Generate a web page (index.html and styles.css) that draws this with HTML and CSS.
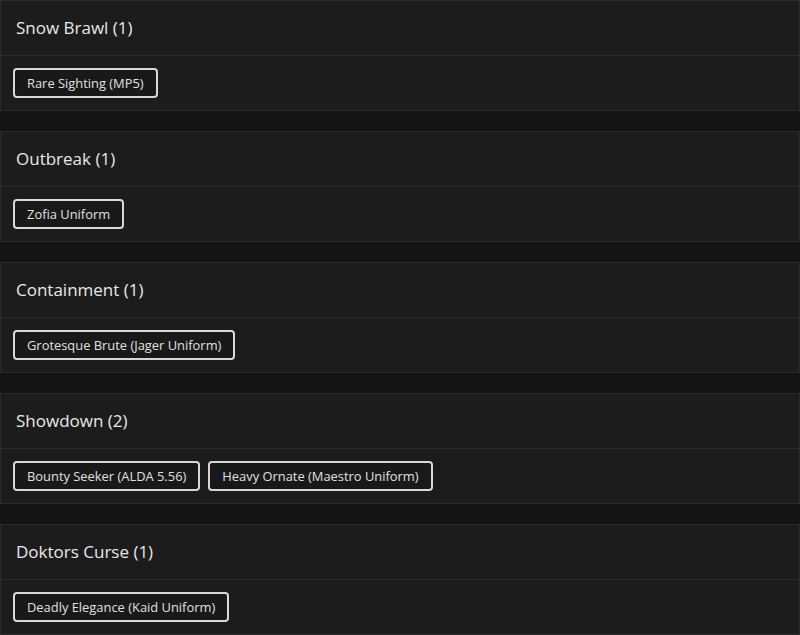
FILE: index.html
```html
<!DOCTYPE html>
<html>
<head>
<meta charset="utf-8">
<link rel="stylesheet" href="styles.css">
</head>
<body>
<div class="list">
  <section class="card">
    <div class="card-head">Snow Brawl (1)</div>
    <div class="card-body">
      <span class="tag">Rare Sighting (MP5)</span>
    </div>
  </section>
  <section class="card">
    <div class="card-head">Outbreak (1)</div>
    <div class="card-body">
      <span class="tag">Zofia Uniform</span>
    </div>
  </section>
  <section class="card">
    <div class="card-head">Containment (1)</div>
    <div class="card-body">
      <span class="tag">Grotesque Brute (Jager Uniform)</span>
    </div>
  </section>
  <section class="card">
    <div class="card-head">Showdown (2)</div>
    <div class="card-body">
      <span class="tag">Bounty Seeker (ALDA 5.56)</span>
      <span class="tag">Heavy Ornate (Maestro Uniform)</span>
    </div>
  </section>
  <section class="card">
    <div class="card-head">Doktors Curse (1)</div>
    <div class="card-body">
      <span class="tag">Deadly Elegance (Kaid Uniform)</span>
    </div>
  </section>
</div>
</body>
</html>
```
FILE: styles.css
```css
html, body {
  margin: 0;
  padding: 0;
  background: #141414;
}
body {
  font-family: "Open Sans", "Liberation Sans", sans-serif;
  color: #e6e6e6;
  height: 635px;
  overflow: hidden;
}
.list {
  display: flex;
  flex-direction: column;
  gap: 20px;
}
.card {
  background: #1c1c1c;
  border: 1px solid #2b2b2b;
}
.card-head {
  height: 55px;
  display: flex;
  align-items: center;
  padding-left: 15px;
  padding-bottom: 2px;
  box-sizing: border-box;
  font-size: 17px;
  font-weight: 500;
  color: #e8e8e8;
  border-bottom: 1px solid #2b2b2b;
}
.card-body {
  display: flex;
  gap: 8px;
  padding: 12px;
  height: 30px;
}
.tag {
  display: inline-flex;
  align-items: center;
  box-sizing: border-box;
  height: 30px;
  padding: 0 12px;
  border: 2px solid #d8d8d8;
  border-radius: 4px;
  background: #191919;
  font-size: 12.9px;
  color: #e0e0e0;
}
```
